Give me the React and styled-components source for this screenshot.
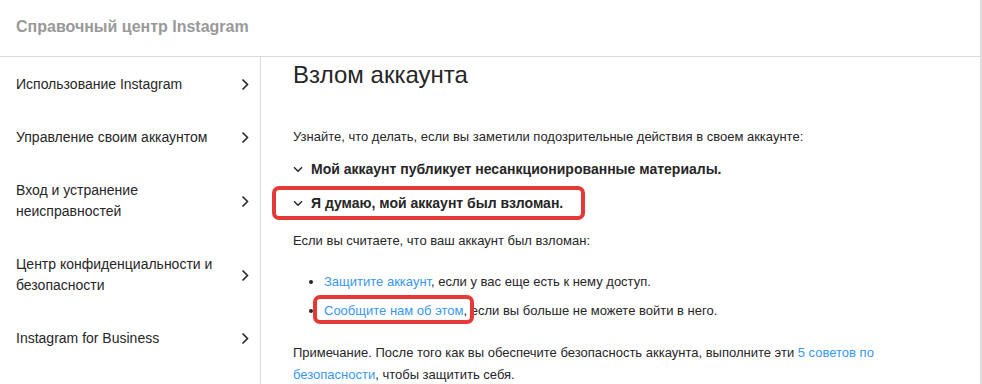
import React from 'react';
import styled, { createGlobalStyle } from 'styled-components';

const GlobalStyle = createGlobalStyle`
  html, body {
    margin: 0;
    padding: 0;
    background: #fff;
  }
  body {
    font-family: "Liberation Sans", Arial, sans-serif;
    color: #262626;
  }
`;

const Page = styled.div`
  width: 982px;
  height: 384px;
  box-sizing: border-box;
  border-right: 2px solid #dbdbdb;
  overflow: hidden;
`;

const Header = styled.header`
  height: 57px;
  border-bottom: 1px solid #dbdbdb;
  display: flex;
  align-items: center;
  padding: 0 16px;
  padding-bottom: 2px;
  box-sizing: border-box;
`;

const Brand = styled.div`
  font-size: 16px;
  font-weight: 700;
  color: #999;
`;

const Body = styled.div`
  display: flex;
`;

const Sidebar = styled.nav`
  width: 260px;
  flex-shrink: 0;
  border-right: 1px solid #dbdbdb;
  min-height: 330px;
  padding-top: 1px;
`;

const NavItem = styled.div`
  display: flex;
  align-items: center;
  justify-content: space-between;
  padding: 16px 11px 16px 16px;
  font-size: 14px;
  line-height: 21px;
  color: #262626;
`;

const NavLabel = styled.span`
  width: 218px;
`;

const Content = styled.main`
  flex: 1;
  padding: 3px 32px 0 32px;
`;

const Title = styled.h1`
  margin: 0;
  font-size: 24px;
  font-weight: 400;
  line-height: 30px;
  color: #262626;
`;

const Text = styled.p`
  margin: ${p => p.$mt || 0}px 0 0;
  font-size: 13px;
  line-height: ${p => p.$lh || 20}px;
  color: #262626;
`;

const Question = styled.div`
  display: flex;
  align-items: center;
  gap: 8px;
  font-size: 14px;
  font-weight: 700;
  line-height: 20px;
  margin-top: ${p => p.$mt || 0}px;
`;

const Highlight = styled.div`
  display: inline-flex;
  border: 4px solid #e53935;
  border-radius: 7px;
  padding: 3px 18px 3px 17px;
  margin: 7px 0 0 -21px;
`;

const List = styled.ul`
  margin: 21px 0 0;
  padding-left: 31px;
  font-size: 13px;
  line-height: 20px;

  li {
    margin-bottom: 9px;
  }
`;

const Link = styled.a`
  color: #3897f0;
  text-decoration: none;
`;

const Circled = styled.span`
  position: relative;

  &::after {
    content: '';
    position: absolute;
    left: -11px;
    right: -7px;
    top: -8px;
    bottom: -6px;
    border: 4px solid #e53935;
    border-radius: 7px;
  }
`;

const ChevronRight = () => (
  <svg width="8" height="13" viewBox="0 0 8 13">
    <path d="M1.5 1.5l5 5-5 5" fill="none" stroke="#262626" strokeWidth="1.6" />
  </svg>
);

const ChevronDown = () => (
  <svg width="10" height="7" viewBox="0 0 10 7">
    <path d="M1 1.2l4 4 4-4" fill="none" stroke="#262626" strokeWidth="1.4" />
  </svg>
);

const navItems = [
  'Использование Instagram',
  'Управление своим аккаунтом',
  'Вход и устранение неисправностей',
  'Центр конфиденциальности и безопасности',
  'Instagram for Business',
];

export default function App() {
  return (
    <Page>
      <GlobalStyle />
      <Header>
        <Brand>Справочный центр Instagram</Brand>
      </Header>
      <Body>
        <Sidebar>
          {navItems.map(item => (
            <NavItem key={item}>
              <NavLabel>{item}</NavLabel>
              <ChevronRight />
            </NavItem>
          ))}
        </Sidebar>
        <Content>
          <Title>Взлом аккаунта</Title>
          <Text $mt={37}>
            Узнайте, что делать, если вы заметили подозрительные действия в своем аккаунте:
          </Text>
          <Question $mt={12}>
            <ChevronDown />
            Мой аккаунт публикует несанкционированные материалы.
          </Question>
          <Highlight>
            <Question>
              <ChevronDown />
              Я думаю, мой аккаунт был взломан.
            </Question>
          </Highlight>
          <Text $mt={11}>Если вы считаете, что ваш аккаунт был взломан:</Text>
          <List>
            <li>
              <Link href="#">Защитите аккаунт</Link>, если у вас еще есть к нему доступ.
            </li>
            <li>
              <Circled><Link href="#">Сообщите нам об этом</Link>,</Circled> если вы больше не можете войти в него.
            </li>
          </List>
          <Text $mt={21} $lh={22}>
            Примечание. После того как вы обеспечите безопасность аккаунта, выполните эти{' '}
            <Link href="#">5 советов по безопасности</Link>, чтобы защитить себя.
          </Text>
        </Content>
      </Body>
    </Page>
  );
}
